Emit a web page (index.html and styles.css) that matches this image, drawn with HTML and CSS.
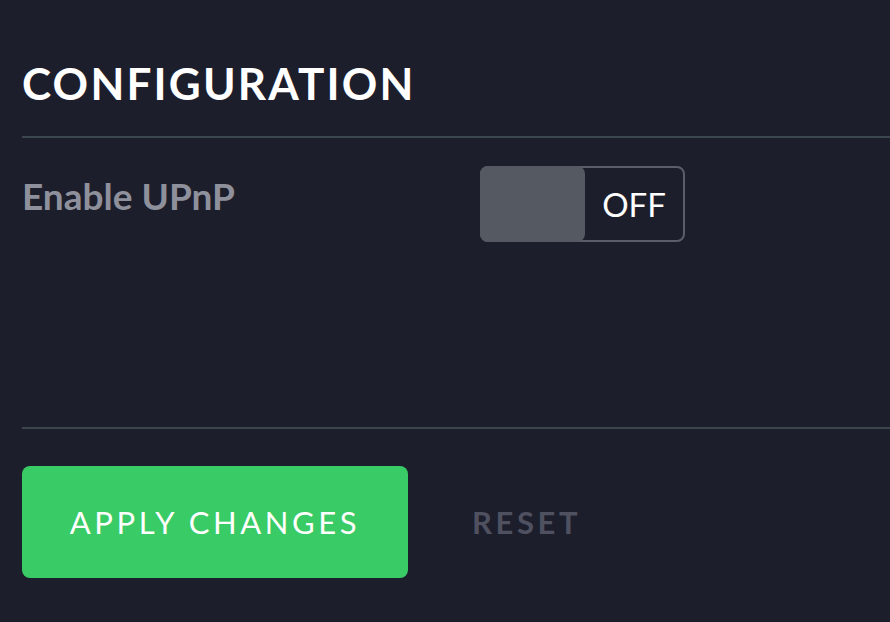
FILE: index.html
```html
<!DOCTYPE html>
<html lang="en">
<head>
<meta charset="UTF-8">
<meta name="viewport" content="width=device-width, initial-scale=1.0">
<title>Configuration</title>
<link rel="stylesheet" href="styles.css">
</head>
<body>
<div id="panel">
  <h1>Configuration</h1>
  <div class="settings">
    <div class="setting-row">
      <div class="setting-label">Enable UPnP</div>
      <div class="toggle" id="upnp-toggle">
        <div class="toggle-knob"></div>
        <div class="toggle-state">OFF</div>
      </div>
    </div>
  </div>
  <div class="actions">
    <button id="apply-button">Apply changes</button>
    <button id="reset-button">Reset</button>
  </div>
</div>
</body>
</html>
```

FILE: styles.css
```css
body {
  font-family: 'Lato', 'Liberation Sans', sans-serif;
  background-color: #1d1e2c;
  margin: 0;
  padding: 0;
  color: #fff;
}
#panel {
  padding-left: 22px;
}
h1 {
  margin: 0;
  padding-top: 57px;
  padding-bottom: 26px;
  font-size: 44px;
  line-height: 53px;
  font-weight: 700;
  letter-spacing: 2.2px;
  text-transform: uppercase;
  border-bottom: 2px solid #3b474d;
}
.settings {
  padding: 28px 0 185px;
  border-bottom: 2px solid #3b474d;
}
.setting-row {
  display: flex;
  align-items: flex-start;
}
.setting-label {
  width: 458px;
  margin-top: 7px;
  font-size: 37px;
  font-weight: 700;
  color: #8e909b;
}
.toggle {
  display: flex;
  width: 205px;
  height: 76px;
  box-sizing: border-box;
  border: 2px solid #5a5e68;
  border-radius: 8px;
  cursor: pointer;
}
.toggle-knob {
  width: 105px;
  margin: -2px 0 -2px -2px;
  background-color: #545962;
  border-radius: 8px;
}
.toggle-state {
  flex: 1;
  display: flex;
  align-items: center;
  justify-content: center;
  font-size: 33px;
  color: #fff;
}
.actions {
  display: flex;
  align-items: center;
  gap: 64px;
  padding-top: 37px;
}
button {
  font-family: inherit;
  font-size: 31px;
  letter-spacing: 3.6px;
  text-transform: uppercase;
  border: none;
  cursor: pointer;
  padding: 0;
}
#apply-button {
  width: 386px;
  height: 112px;
  border-radius: 8px;
  background-color: #39cb65;
  color: #fff;
}
#reset-button {
  background: none;
  color: #4f5160;
  font-weight: 700;
}
```
